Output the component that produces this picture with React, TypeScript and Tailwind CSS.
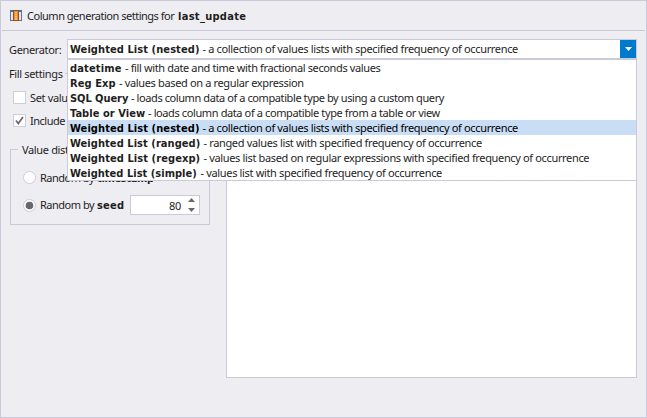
import React from 'react';

const OPTIONS = [
  { name: 'datetime', width: 'w-[52px]', boldTracking: 'tracking-[0.15px]', tracking: 'tracking-[-0.37px]', text: 'fill with date and time with fractional seconds values' },
  { name: 'Reg Exp', width: 'w-[46px]', boldTracking: 'tracking-[0.08px]', tracking: 'tracking-[-0.35px]', text: 'values based on a regular expression' },
  { name: 'SQL Query', width: 'w-[58px]', boldTracking: 'tracking-[-0.05px]', tracking: 'tracking-[-0.41px]', text: 'loads column data of a compatible type by using a custom query' },
  { name: 'Table or View', width: 'w-[75px]', boldTracking: 'tracking-[0.05px]', tracking: 'tracking-[-0.39px]', text: 'loads column data of a compatible type from a table or view' },
  { name: 'Weighted List (nested)', width: 'w-[129.5px]', boldTracking: 'tracking-[0.08px]', tracking: 'tracking-[-0.34px]', text: 'a collection of values lists with specified frequency of occurrence' },
  { name: 'Weighted List (ranged)', width: 'w-[130.5px]', boldTracking: 'tracking-[0.06px]', tracking: 'tracking-[-0.35px]', text: 'ranged values list with specified frequency of occurrence' },
  { name: 'Weighted List (regexp)', width: 'w-[130.5px]', boldTracking: 'tracking-[0.08px]', tracking: 'tracking-[-0.35px]', text: 'values list based on regular expressions with specified frequency of occurrence' },
  { name: 'Weighted List (simple)', width: 'w-[127.5px]', boldTracking: 'tracking-[0.02px]', tracking: 'tracking-[-0.34px]', text: 'values list with specified frequency of occurrence' },
];

const BOLD = "font-['DejaVu_Sans_Condensed','DejaVu_Sans',sans-serif] font-bold font-stretch-condensed text-[11px]";

function OptionText({ option }: { option: (typeof OPTIONS)[number] }) {
  return (
    <>
      <span className={`${BOLD} ${option.boldTracking} ${option.width} shrink-0`}>{option.name}</span>
      <span className={`ml-[3px] ${option.tracking}`}>- {option.text}</span>
    </>
  );
}

function ColumnIcon() {
  return (
    <svg width="12" height="11" viewBox="0 0 12 11" shapeRendering="crispEdges" className="shrink-0">
      <rect width="12" height="11" fill="#66758f" />
      <rect x="1" y="2" width="10" height="8" fill="#dce8f5" />
      <rect width="12" height="2" fill="#3f74bb" />
      <rect x="3" width="6" height="11" fill="#9c4a14" />
      <rect x="4" y="1" width="4" height="9" fill="#f08a2c" />
      <rect x="5" y="2" width="2" height="8" fill="#ffc56a" />
      <path d="M5 3h2v1H5zM5 5h2v1H5zM5 7h2v1H5z" fill="#f5a040" />
    </svg>
  );
}

function Radio({ checked }: { checked?: boolean }) {
  return (
    <svg width="13" height="13" className="shrink-0">
      <circle cx="6.5" cy="6.5" r="6" fill="#fff" stroke="#cdcddd" />
      {checked && <circle cx="6.5" cy="6.5" r="3.8" fill="#686868" />}
    </svg>
  );
}

export default function App() {
  return (
    <div className="h-[418px] w-[647px] overflow-hidden border border-[#cacada] bg-[#eeedf2] font-['Noto_Sans',sans-serif] text-[11px] leading-[15px] tracking-[-0.35px] whitespace-nowrap text-[#1e1e1e]">
      <header className="mx-px flex h-[30px] items-center border-b border-[#cacada] pl-2">
        <ColumnIcon />
        <div className="ml-[5px] flex items-baseline">
          <span className="w-[151px] tracking-[-0.48px]">Column generation settings for</span>
          <span className={`${BOLD} tracking-[0.3px]`}>last_update</span>
        </div>
      </header>

      <div className="mt-2 flex h-[20px] items-center pl-2">
        <span className="w-[58px] shrink-0">Generator:</span>
        <div className="relative flex h-[20px] w-[570px] border border-[#cacada] bg-white">
          <div className="flex flex-1 items-baseline pt-px pl-[2px]">
            <OptionText option={OPTIONS[4]} />
          </div>
          <div className="flex w-4 items-center justify-center bg-[#007acc]">
            <svg width="7" height="4"><path d="M0 0h7L3.5 4z" fill="#fff" /></svg>
          </div>
          <ul className="absolute top-[19px] -left-px z-10 w-[570px] border border-[#cacada] bg-white">
            {OPTIONS.map((o, i) => (
              <li key={o.name} className={`flex h-[15px] items-baseline pl-[2px] ${i === 4 ? 'bg-[#c9def5] text-black' : ''}`}>
                <OptionText option={o} />
              </li>
            ))}
          </ul>
        </div>
      </div>

      <div className="mt-[7px] flex h-[15px] items-center pl-2">
        <span>Fill settings</span>
        <span className="ml-[2px] h-px w-[560px] bg-[#cacada]" />
      </div>

      <div className="flex">
        <div className="w-[225px] pl-[9px]">
          <div className="mt-[9px] flex h-[15px] items-center pl-[3px]">
            <span className="size-[13px] border border-[#cdcddd] bg-white" />
            <span className="ml-1">Set value</span>
          </div>
          <div className="mt-2 flex h-[15px] items-center pl-[3px]">
            <span className="size-[13px] border border-[#cdcddd] bg-white">
              <svg width="11" height="11"><path d="M2 5.5l2.3 3L9 2" fill="none" stroke="#686868" strokeWidth="1.7" /></svg>
            </span>
            <span className="ml-1 tracking-[-0.5px]">Include</span>
          </div>
          <fieldset className="mt-[14px] h-[83px] w-[200px] border border-[#cacada]">
            <legend className="ml-[7px] h-[15px] px-1">Value distribution</legend>
            <div className="mt-[13px] flex h-[15px] items-center pl-3">
              <Radio />
              <div className="ml-1 flex items-baseline">
                <span className="w-[57px] tracking-[-0.5px]">Random by</span>
                <b className={BOLD}>timestamp</b>
              </div>
            </div>
            <div className="mt-[10px] flex h-5 items-center pl-3">
              <Radio checked />
              <div className="ml-1 flex items-baseline">
                <span className="w-[57px] tracking-[-0.5px]">Random by</span>
                <b className={`${BOLD} tracking-[0.2px] w-[33px]`}>seed</b>
              </div>
              <div className="flex h-5 w-[70px] items-center justify-end border border-[#cacada] bg-white pr-1">
                <span className="mr-[7px]">80</span>
                <svg width="7" height="14"><path d="M0 4L3.5 0L7 4zM0 10h7L3.5 14z" fill="#686868" /></svg>
              </div>
            </div>
          </fieldset>
        </div>
        <div className="h-[297px] w-[411px] border border-[#cacada] bg-white" />
      </div>
    </div>
  );
}
